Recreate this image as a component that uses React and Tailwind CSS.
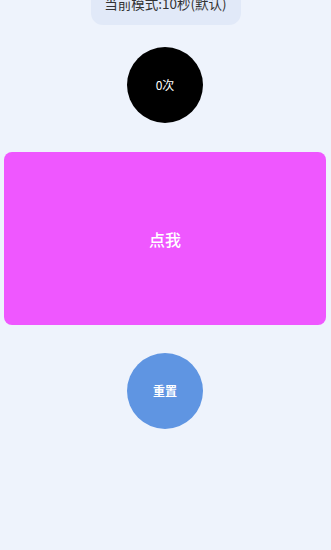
const font = { fontFamily: '"Noto Sans CJK SC", "Noto Sans", sans-serif' };

const App = () => {
  return (
    <div
      className="w-[331px] h-[550px] overflow-hidden bg-[#eef3fc] flex flex-col items-center"
      style={font}
    >
      <div className="-mt-[19px] w-[150px] rounded-xl bg-[#e1e9f8] py-3 text-center text-[13.5px] leading-5 text-[#333]">
        当前模式:10秒(默认)
      </div>

      <div className="mt-[22px] -ml-px w-[76px] h-[76px] rounded-full bg-black flex items-center justify-center text-white text-[12px]">
        0次
      </div>

      <button className="mt-[29px] -ml-px w-[322px] h-[173px] rounded-lg bg-[#ef57ff] flex items-center justify-center text-white text-[16px] font-medium">
        点我
      </button>

      <button className="mt-[28px] -ml-px w-[76px] h-[76px] rounded-full bg-[#5f95e2] flex items-center justify-center text-white text-[12px] font-bold">
        重置
      </button>
    </div>
  );
};

export default App;
